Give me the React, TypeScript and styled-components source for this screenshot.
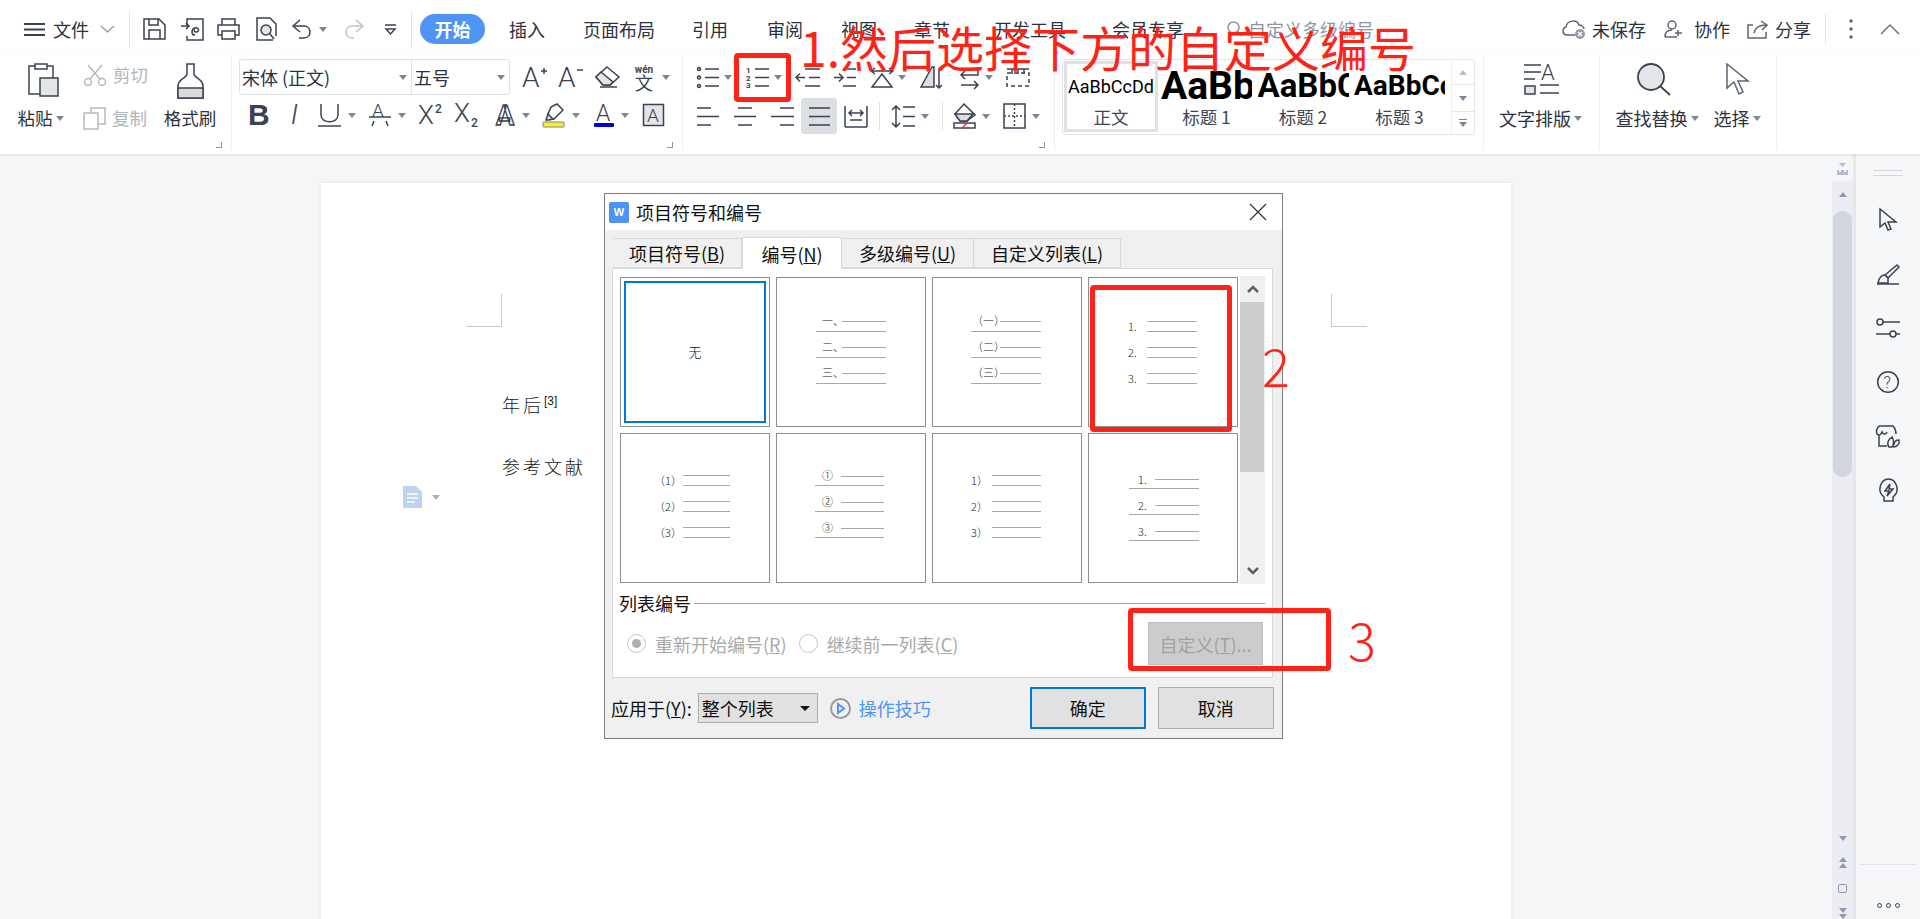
import React from 'react'
import styled, { createGlobalStyle } from 'styled-components'

const INK = '#3a4252'
const MUTED = '#b7babf'
const RED = '#ff2216'
const CJK = '"Noto Sans CJK SC", "Noto Sans", sans-serif'

const GlobalStyle = createGlobalStyle`
  html, body { margin: 0; padding: 0; overflow: hidden; }
  body { font-family: ${CJK}; color: #2c3340; }
  * { box-sizing: border-box; }
  svg { display: block; flex: none; overflow: visible; }
  svg text { font-family: Roboto, sans-serif; stroke: none; }
`

const Shell = styled.div`
  position: relative;
  width: 1920px;
  height: 919px;
  overflow: hidden;
  display: flex;
  flex-direction: column;
  background: #f5f6f8;
`

/* title bar */
const TopBar = styled.header`
  height: 52px;
  flex: none;
  background: #fff;
  display: flex;
  align-items: center;
  padding: 6px 0 0 24px;
  font-size: 18px;
  line-height: 24px;
  & > * { flex: none; }
`
const Gap = styled.div<{ $l: number }>`
  margin-left: ${(p) => p.$l}px;
  display: flex;
  align-items: center;
`
const VRule = styled.div<{ $l?: number; $h?: number }>`
  width: 1px;
  height: ${(p) => p.$h ?? 36}px;
  margin-left: ${(p) => p.$l ?? 0}px;
  background: #e3e4e7;
`
const MenuLabel = styled.span<{ $l?: number; $c?: string }>`
  margin-left: ${(p) => p.$l ?? 0}px;
  color: ${(p) => p.$c ?? '#2c3340'};
  white-space: nowrap;
`
const StartPill = styled.div`
  margin-left: 8px;
  width: 65px;
  height: 30px;
  border-radius: 15px;
  background: #4e94f5;
  color: #fff;
  font-weight: 700;
  display: flex;
  align-items: center;
  justify-content: center;
`
const Caret = styled.i<{ $l?: number; $c?: string }>`
  flex: none;
  display: block;
  margin-left: ${(p) => p.$l ?? 0}px;
  width: 0;
  height: 0;
  border-left: 4px solid transparent;
  border-right: 4px solid transparent;
  border-top: 5px solid ${(p) => p.$c ?? '#7d8598'};
`

/* ribbon */
const Ribbon = styled.div`
  height: 102px;
  flex: none;
  background: #fff;
  display: flex;
  padding-top: 4px;
  box-shadow: 0 1px 3px rgba(60, 70, 90, 0.14);
  position: relative;
  z-index: 1;
`
const Section = styled.section<{ $w: number; $pl?: number; $pt?: number }>`
  position: relative;
  flex: none;
  width: ${(p) => p.$w}px;
  height: 94px;
  padding-left: ${(p) => p.$pl ?? 0}px;
  padding-top: ${(p) => p.$pt ?? 0}px;
  border-right: 1px solid #eeeff1;
`
const Corner = styled.i<{ $x: number }>`
  position: absolute;
  left: ${(p) => p.$x}px;
  top: 86px;
  width: 6px;
  height: 6px;
  border-right: 1px solid #8d93a0;
  border-bottom: 1px solid #8d93a0;
`
const ClipRow = styled.div`
  display: flex;
  align-items: flex-start;
`
const BigTool = styled.div<{ $w: number; $ml?: number }>`
  width: ${(p) => p.$w}px;
  margin-left: ${(p) => p.$ml ?? 0}px;
  height: 67px;
  display: flex;
  flex-direction: column;
  align-items: center;
  justify-content: space-between;
  font-size: 17.5px;
  line-height: 24px;
  white-space: nowrap;
`
const ToolLabel = styled.div`
  display: flex;
  align-items: center;
  gap: 3px;
`
const SmallTools = styled.div`
  margin-left: 21px;
  width: 66px;
  height: 67px;
  display: flex;
  flex-direction: column;
  justify-content: space-between;
`
const SmallTool = styled.div`
  display: flex;
  align-items: center;
  gap: 6px;
  font-size: 17.5px;
  line-height: 24px;
  color: #b2b5ba;
  white-space: nowrap;
`
const ToolRow = styled.div<{ $h: number; $mt?: number }>`
  display: flex;
  align-items: center;
  height: ${(p) => p.$h}px;
  margin-top: ${(p) => p.$mt ?? 0}px;
`
const FontBox = styled.div`
  width: 271px;
  height: 36px;
  display: flex;
  border: 1px solid #e1e2e5;
  border-radius: 3px;
  font-size: 18px;
  line-height: 34px;
`
const FontField = styled.div<{ $w: number; $border?: boolean }>`
  width: ${(p) => p.$w}px;
  display: flex;
  align-items: center;
  justify-content: space-between;
  padding: 0 4px 0 2px;
  border-right: ${(p) => (p.$border ? '1px solid #e1e2e5' : 'none')};
`
const WenStack = styled.div`
  margin-left: 12px;
  width: 24px;
  display: flex;
  flex-direction: column;
  align-items: center;
  color: ${INK};
  font-size: 18px;
  line-height: 16px;
`
const WenTop = styled.span`
  font-size: 10px;
  font-weight: 700;
  line-height: 9px;
  font-family: Roboto, sans-serif;
`
const BoldGlyph = styled.span<{ $l: number }>`
  margin-left: ${(p) => p.$l}px;
  font: 700 30px/28px 'Liberation Sans', sans-serif;
  color: ${INK};
`
const ItalicGlyph = styled.span<{ $l: number }>`
  margin-left: ${(p) => p.$l}px;
  font: italic 300 28px/28px Roboto, sans-serif;
  color: ${INK};
`
const OutlineGlyph = styled.text`
  fill: #fff;
  stroke: ${INK};
  stroke-width: 1.3px;
  font-size: 27px;
  font-weight: 700;
`
const HiliteCell = styled.div`
  margin-left: 7px;
  width: 36px;
  height: 36px;
  border-radius: 3px;
  background: #dcdfe3;
  display: flex;
  align-items: center;
  justify-content: center;
`

/* style gallery */
const Gallery = styled.div`
  width: 413px;
  height: 76px;
  display: flex;
  border: 1px solid #e3e5e8;
  border-radius: 3px;
`
const StyleCard = styled.div<{ $w: number; $active?: boolean }>`
  flex: none;
  width: ${(p) => p.$w}px;
  height: ${(p) => (p.$active ? '71px' : '74px')};
  margin-top: ${(p) => (p.$active ? '1px' : '0')};
  margin-left: ${(p) => (p.$active ? '1px' : '0')};
  border: ${(p) => (p.$active ? '3px solid #dfe1e4' : '0')};
  padding-top: ${(p) => (p.$active ? '3px' : '6px')};
  display: flex;
  flex-direction: column;
  align-items: center;
  font-size: 17.5px;
  line-height: 24px;
  white-space: nowrap;
`
const Sample = styled.div<{ $size: number; $bold?: boolean; $w: number }>`
  width: ${(p) => p.$w}px;
  height: 40px;
  overflow: hidden;
  color: #000;
  font-family: Roboto, sans-serif;
  font-size: ${(p) => p.$size}px;
  font-weight: ${(p) => (p.$bold ? 700 : 400)};
  line-height: 40px;
`
const StyleName = styled.div<{ $mt?: number }>`
  margin-top: ${(p) => p.$mt ?? 0}px;
  color: #3f4654;
`
const GalleryScroll = styled.div`
  margin-left: auto;
  width: 23px;
  display: flex;
  flex-direction: column;
  border-left: 1px solid #eeeff1;
`
const GalleryBtn = styled.div<{ $h: number; $top?: boolean }>`
  height: ${(p) => p.$h}px;
  display: flex;
  flex-direction: column;
  gap: 2px;
  align-items: center;
  justify-content: center;
  border-top: ${(p) => (p.$top ? '1px solid #e6e7ea' : 'none')};
`
const TinyBar = styled.i`
  display: block;
  width: 8px;
  height: 1px;
  background: #7d8598;
`
const UpCaret = styled.i<{ $c?: string; $w?: number }>`
  display: block;
  width: 0;
  height: 0;
  border-left: ${(p) => p.$w ?? 4}px solid transparent;
  border-right: ${(p) => p.$w ?? 4}px solid transparent;
  border-bottom: 5px solid ${(p) => p.$c ?? '#b9bdc6'};
`
const BigColumn = styled.div<{ $w: number; $ml: number }>`
  width: ${(p) => p.$w}px;
  margin-left: ${(p) => p.$ml}px;
  height: 67px;
  display: flex;
  flex-direction: column;
  align-items: center;
  justify-content: space-between;
  font-size: 18px;
  line-height: 24px;
  white-space: nowrap;
`

/* document area */
const Workspace = styled.main`
  flex: 1;
  min-height: 0;
  display: flex;
`
const Canvas = styled.div`
  flex: 1;
  padding: 29px 0 0 321px;
  overflow: hidden;
`
const Page = styled.article`
  position: relative;
  width: 1190px;
  height: 800px;
  background: #fff;
  box-shadow: 0 0 4px rgba(60, 70, 90, 0.14);
  padding: 111px 144px 0 145px;
`
const MarkRow = styled.div`
  display: flex;
  justify-content: space-between;
`
const CropMark = styled.div<{ $side: 'left' | 'right' }>`
  width: 36px;
  height: 33px;
  border-bottom: 1px solid #c9c9c9;
  border-${(p) => p.$side}: 1px solid #c9c9c9;
`
const DocLine = styled.p<{ $mt: number }>`
  margin: ${(p) => p.$mt}px 0 0 36px;
  font-size: 18px;
  line-height: 30px;
  letter-spacing: 3px;
  color: #1c1c1c;
  font-weight: 300;
`
const Cite = styled.sup`
  font: 12px/12px 'Liberation Sans', sans-serif;
  letter-spacing: 0;
  vertical-align: 7px;
`
const ParaMark = styled.div`
  position: absolute;
  left: 82px;
  top: 303px;
  display: flex;
  align-items: center;
  gap: 10px;
`
const ScrollColumn = styled.aside`
  flex: none;
  width: 24px;
  display: flex;
  flex-direction: column;
  border-right: 3px solid #e7e8ec;
`
const RulerBtn = styled.div`
  height: 27px;
  padding: 9px 0 0 5px;
`
const Track = styled.div`
  flex: 1;
  background: #ecedf2;
  display: flex;
  flex-direction: column;
  align-items: center;
  padding-top: 11px;
`
const Thumb = styled.div`
  width: 19px;
  height: 266px;
  margin-top: 14px;
  border-radius: 9px;
  background: #d3d6de;
`
const TrackFoot = styled.div`
  margin-top: auto;
  display: flex;
  flex-direction: column;
  align-items: center;
`
const Stack = styled.div<{ $mt: number }>`
  margin-top: ${(p) => p.$mt}px;
  display: flex;
  flex-direction: column;
  gap: 1px;
`
const DownCaret = styled.i`
  display: block;
  width: 0;
  height: 0;
  border-left: 4.5px solid transparent;
  border-right: 4.5px solid transparent;
  border-top: 5px solid #8f98b0;
`
const SquareBtn = styled.i`
  display: block;
  margin-top: 16px;
  width: 9px;
  height: 9px;
  border: 1.5px solid #8f98b0;
  border-radius: 2px;
`
const Rail = styled.aside`
  flex: none;
  width: 64px;
  display: flex;
  flex-direction: column;
  align-items: center;
  background: #f6f7f9;
  padding-top: 16px;
`
const Grip = styled.div`
  width: 30px;
  height: 6px;
  border-top: 1px solid #d5d6d9;
  border-bottom: 1px solid #d5d6d9;
`
const RailIcons = styled.div`
  margin-top: 32px;
  display: flex;
  flex-direction: column;
  gap: 30px;
`
const RailSlot = styled.div`
  width: 24px;
  height: 24px;
  display: flex;
  align-items: center;
  justify-content: center;
`
const RailFoot = styled.div`
  margin-top: auto;
  width: 58px;
  height: 55px;
  border-top: 1px solid #e3e4e9;
  padding-top: 38px;
  display: flex;
  justify-content: center;
  gap: 4px;
`
const Ring = styled.i`
  display: block;
  width: 5px;
  height: 5px;
  border: 1.5px solid ${INK};
  border-radius: 50%;
`

/* dialog */
const Dialog = styled.div`
  position: absolute;
  left: 604px;
  top: 193px;
  width: 679px;
  height: 546px;
  background: #f0f0f0;
  border: 1px solid #7f7f7f;
  color: #111;
  font-size: 18px;
  line-height: 24px;
  z-index: 2;
`
const DialogTitle = styled.div`
  height: 36px;
  background: #fff;
  display: flex;
  align-items: center;
  padding: 0 16px 0 4px;
  justify-content: space-between;
`
const TitleLeft = styled.div`
  display: flex;
  align-items: center;
  gap: 7px;
`
const AppBadge = styled.div`
  width: 20px;
  height: 21px;
  border-radius: 2px;
  background: #4d94f5;
  display: flex;
  align-items: center;
  justify-content: center;
  color: #fff;
  font: 700 11px/1 'Liberation Sans', sans-serif;
`
const DialogTabs = styled.div`
  display: flex;
  margin: 7px 0 0 8px;
  height: 31px;
  align-items: flex-end;
`
const DialogTab = styled.div<{ $w: number; $active?: boolean }>`
  width: ${(p) => p.$w}px;
  height: ${(p) => (p.$active ? 32 : 30)}px;
  background: ${(p) => (p.$active ? '#fff' : '#f0f0f0')};
  border: 1px solid #d9d9d9;
  border-bottom: ${(p) => (p.$active ? '0' : '1px solid #d9d9d9')};
  border-left-width: ${(p) => (p.$active ? 1 : 0)}px;
  display: flex;
  align-items: center;
  justify-content: center;
  position: relative;
  z-index: ${(p) => (p.$active ? 1 : 0)};
  margin-bottom: ${(p) => (p.$active ? -1 : 0)}px;
  white-space: nowrap;
`
const Panel = styled.div`
  margin: 0 9px 0 7px;
  height: 410px;
  background: #fff;
  border: 1px solid #d9d9d9;
  padding: 8px 0 0 7px;
  display: flex;
  flex-direction: column;
`
const ChoiceArea = styled.div`
  display: flex;
  align-items: flex-start;
`
const CardGrid = styled.div`
  display: grid;
  grid-template-columns: repeat(4, 150px);
  grid-auto-rows: 150px;
  gap: 6px;
`
const Card = styled.div<{ $left?: number; $top?: number }>`
  border: 1px solid #8e8e8e;
  padding-top: ${(p) => p.$top ?? 0}px;
  padding-left: ${(p) => p.$left ?? 0}px;
  display: flex;
  flex-direction: column;
`
const NoneCard = styled.div`
  border: 1px solid #8e8e8e;
  padding: 3px;
`
const NoneInner = styled.div`
  height: 100%;
  border: 2px solid #0078d7;
  display: flex;
  align-items: center;
  justify-content: center;
  font-size: 13px;
  font-weight: 300;
`
const PreviewRow = styled.div<{ $w: number; $under?: boolean; $pad: number }>`
  flex: none;
  width: ${(p) => p.$w}px;
  height: 26px;
  padding-left: ${(p) => p.$pad}px;
  display: flex;
  align-items: flex-end;
  border-bottom: ${(p) => (p.$under ? '1px solid #a8a8a8' : '0')};
`
const PreviewLabel = styled.span<{ $w: number; $pb: number }>`
  flex: none;
  width: ${(p) => p.$w}px;
  padding-bottom: ${(p) => p.$pb}px;
  font-size: 11px;
  font-weight: 300;
  line-height: 12px;
  color: #222;
  white-space: nowrap;
`
/* a row either has one rule above its own underline, or a pair of rules after the label */
const PreviewRule = styled.div<{ $pair?: boolean; $gap: number }>`
  flex: 1;
  height: ${(p) => (p.$pair ? p.$gap + 2 : 1)}px;
  margin-bottom: ${(p) => (p.$pair ? 0 : p.$gap)}px;
  border-top: 1px solid #a8a8a8;
  border-bottom: ${(p) => (p.$pair ? '1px solid #a8a8a8' : '0')};
`
const VScroll = styled.div`
  margin: -1px 0 0 2px;
  width: 25px;
  height: 308px;
  background: #f0f0f0;
  display: flex;
  flex-direction: column;
  align-items: center;
`
const ScrollArrow = styled.div<{ $end?: boolean }>`
  height: 26px;
  margin-top: ${(p) => (p.$end ? 'auto' : '0')};
  display: flex;
  align-items: center;
  justify-content: center;
`
const VThumb = styled.div`
  width: 24px;
  margin-right: 1px;
  height: 170px;
  background: #cdcdcd;
`
const GroupHead = styled.div`
  margin: 10px 0 0 -1px;
  height: 18px;
  display: flex;
  align-items: center;
  gap: 3px;
  padding-right: 7px;
`
const GroupLine = styled.div`
  flex: 1;
  height: 1px;
  background: #a0a0a0;
`
const OptionRow = styled.div`
  margin-top: 10px;
  height: 43px;
  display: flex;
  align-items: center;
  padding-left: 7px;
  padding-right: 9px;
  color: #a9a9a9;
`
const Radio = styled.i<{ $on?: boolean; $l?: number }>`
  flex: none;
  position: relative;
  display: block;
  width: 19px;
  height: 19px;
  margin-left: ${(p) => p.$l ?? 0}px;
  margin-right: 9px;
  border: 1px solid #c8c8c8;
  border-radius: 50%;
  &::after {
    content: '';
    display: ${(p) => (p.$on ? 'block' : 'none')};
    position: absolute;
    inset: 4px;
    border-radius: 50%;
    background: #b0b0b0;
  }
`
const DisabledBtn = styled.div`
  margin-left: auto;
  width: 115px;
  height: 43px;
  background: #cccccc;
  border: 1px solid #bfbfbf;
  display: flex;
  align-items: center;
  justify-content: center;
  color: #a2a2a2;
`
const DialogFoot = styled.div`
  margin-top: 9px;
  padding: 0 8px 0 6px;
  display: flex;
  align-items: center;
  height: 42px;
`
const SelectBox = styled.div`
  margin-left: 6px;
  width: 120px;
  height: 30px;
  background: #e1e1e1;
  border: 1px solid #adadad;
  display: flex;
  align-items: center;
  justify-content: space-between;
  padding: 0 7px 0 3px;
`
const BlackCaret = styled.i`
  display: block;
  width: 0;
  height: 0;
  border-left: 5px solid transparent;
  border-right: 5px solid transparent;
  border-top: 5px solid #111;
`
const LinkText = styled.span`
  color: #4d94f5;
  margin-left: 8px;
`
const FootButton = styled.div<{ $primary?: boolean; $l: number }>`
  width: 116px;
  height: 42px;
  margin-left: ${(p) => p.$l}px;
  background: #e1e1e1;
  border: ${(p) => (p.$primary ? '2px solid #0078d7' : '1px solid #adadad')};
  display: flex;
  align-items: center;
  justify-content: center;
`

/* red annotations drawn over the screenshot */
const RedBox = styled.div<{ $x: number; $y: number; $w: number; $h: number }>`
  position: absolute;
  left: ${(p) => p.$x}px;
  top: ${(p) => p.$y}px;
  width: ${(p) => p.$w}px;
  height: ${(p) => p.$h}px;
  border: 5px solid ${RED};
  border-radius: 4px;
  z-index: 3;
`
const RedText = styled.div<{ $x: number; $y: number; $size: number }>`
  position: absolute;
  left: ${(p) => p.$x}px;
  top: ${(p) => p.$y}px;
  color: ${RED};
  font-size: ${(p) => p.$size}px;
  line-height: 1;
  font-weight: 400;
  white-space: nowrap;
  z-index: 3;
`
const RedDigit = styled(RedText)`
  font-weight: 300;
`

type IconProps = { w: number; h: number; c?: string; sw?: number; children: React.ReactNode }
const Ic = ({ w, h, c = INK, sw = 1.5, children }: IconProps) => (
  <svg width={w} height={h} viewBox={`0 0 ${w} ${h}`} fill="none" stroke={c} strokeWidth={sw}>
    {children}
  </svg>
)

const Lines = ({ w, rows }: { w: number; rows: [number, number][] }) => (
  <Ic w={w} h={21}>
    <path d={rows.map(([a, b], i) => `M${a} ${2 + i * 8.5}H${b}`).join('')} />
  </Ic>
)

type PreviewDef = {
  labels: string[]
  left: number
  top: number
  width: number
  pad: number
  labelW: number
  full?: boolean
  gap: number
  pb: number
}

const previews: PreviewDef[] = [
  { labels: ['一、', '二、', '三、'], left: 39, top: 28, width: 70, pad: 6, labelW: 20, full: true, gap: 9, pb: 5 },
  { labels: ['（一）', '（二）', '（三）'], left: 38, top: 28, width: 70, pad: 1, labelW: 28, full: true, gap: 9, pb: 5 },
  { labels: ['1.', '2.', '3.'], left: 39, top: 28, width: 69, pad: 0, labelW: 19, gap: 9, pb: 0 },
  { labels: ['（1）', '（2）', '（3）'], left: 33, top: 26, width: 76, pad: 0, labelW: 29, gap: 9, pb: 0 },
  { labels: ['①', '②', '③'], left: 38, top: 26, width: 69, pad: 7, labelW: 19, full: true, gap: 8, pb: 4 },
  { labels: ['1）', '2）', '3）'], left: 38, top: 26, width: 70, pad: 0, labelW: 21, gap: 9, pb: 0 },
  { labels: ['1.', '2.', '3.'], left: 40, top: 29, width: 70, pad: 9, labelW: 17, full: true, gap: 8, pb: 3 },
]

const Preview = ({ def }: { def: PreviewDef }) => (
  <Card $left={def.left} $top={def.top}>
    {def.labels.map((l) => (
      <PreviewRow key={l} $w={def.width} $pad={def.pad} $under={def.full}>
        <PreviewLabel $w={def.labelW} $pb={def.pb}>{l}</PreviewLabel>
        <PreviewRule $gap={def.gap} $pair={!def.full} />
      </PreviewRow>
    ))}
  </Card>
)

const App = () => (
  <Shell>
    <GlobalStyle />
    <TopBar>
      <Ic w={21} h={13} sw={2}><path d="M0 1H21M0 6.500H21M0 12H21" /></Ic>
      <MenuLabel $l={8}>文件</MenuLabel>
      <Gap $l={11}>
        <Ic w={15} h={8} c="#9aa0ab"><path d="M1 1L7.500 7L14 1" /></Ic>
      </Gap>
      <VRule $l={14} />
      <Gap $l={13}>
        <Ic w={23} h={22}>
          <path d="M1 1H16L22 7V21H1Z" />
          <path d="M6 1V7H15V1M6 21V12H17V21" />
        </Ic>
      </Gap>
      <Gap $l={15}>
        <Ic w={23} h={23}>
          <path d="M6 7V1H22V22H6V18" />
          <path d="M0 8H8M5 5L8 8L5 11" />
          <path d="M14 17C10 17 10 11 14 10C18 9 19 14 15 14C13 14 13 12 14 12" />
        </Ic>
      </Gap>
      <Gap $l={13}>
        <Ic w={23} h={22}>
          <path d="M5 7V1H18V7M5 17H1V7H22V17H18" />
          <path d="M5 13H18V21H5Z" />
        </Ic>
      </Gap>
      <Gap $l={16}>
        <Ic w={21} h={24}>
          <path d="M17 23H1V1H14L20 7V19" />
          <circle cx="10" cy="13" r="5" fill="#e3e5e8" />
          <path d="M14 17L18 22" />
        </Ic>
      </Gap>
      <Gap $l={15}>
        <Ic w={20} h={20}>
          <path d="M8 1L1 7L8 13" />
          <path d="M1 7H12C20 7 20 19 12 19H7" />
        </Ic>
      </Gap>
      <Caret $l={7} />
      <Gap $l={17}>
        <Ic w={20} h={20} c="#bfc2c7">
          <path d="M12 1L19 7L12 13" />
          <path d="M19 7H8C0 7 0 19 8 19H10" />
        </Ic>
      </Gap>
      <Gap $l={21}>
        <Ic w={11} h={11}><path d="M0 1H11M1 5L5.500 10L10 5Z" /></Ic>
      </Gap>
      <VRule $l={15} />
      <StartPill>开始</StartPill>
      <MenuLabel $l={24}>插入</MenuLabel>
      <MenuLabel $l={38}>页面布局</MenuLabel>
      <MenuLabel $l={37}>引用</MenuLabel>
      <MenuLabel $l={39}>审阅</MenuLabel>
      <MenuLabel $l={38}>视图</MenuLabel>
      <MenuLabel $l={37}>章节</MenuLabel>
      <MenuLabel $l={44}>开发工具</MenuLabel>
      <MenuLabel $l={46}>会员专享</MenuLabel>
      <Gap $l={43}>
        <Ic w={15} h={16} c="#8e95a3"><circle cx="6.500" cy="6.500" r="5.500" /><path d="M10.500 10.500L15 15" /></Ic>
      </Gap>
      <MenuLabel $l={6} $c="#8e95a3">自定义多级编号</MenuLabel>
      <Gap $l={188}>
        <Ic w={23} h={20} c="#5c6475">
          <path d="M13 16H5C0 16 0 9 4 8C5 1 15 0 17 6C19 6 22 8 22 10" />
          <circle cx="18" cy="15" r="5" fill="#959cae" stroke="none" />
          <path d="M16 13L20 17M20 13L16 17" stroke="#fff" />
        </Ic>
      </Gap>
      <MenuLabel $l={7}>未保存</MenuLabel>
      <Gap $l={18}>
        <Ic w={20} h={18} c="#5c6475">
          <circle cx="8" cy="5" r="4" />
          <path d="M1 17C1 12 4 10 8 10M1 17H13M14 10V16M11 13H18" />
        </Ic>
      </Gap>
      <MenuLabel $l={10}>协作</MenuLabel>
      <Gap $l={17}>
        <Ic w={21} h={19} c="#5c6475">
          <path d="M6 5H1V18H19V12" />
          <path d="M7 13C8 8 11 5 19 5M14 1L20 5L15 10" />
        </Ic>
      </Gap>
      <MenuLabel $l={7}>分享</MenuLabel>
      <VRule $l={14} $h={30} />
      <Gap $l={23}>
        <Ic w={4} h={20} c="none">
          <circle cx="2" cy="2" r="1.700" fill="#5c6475" />
          <circle cx="2" cy="10" r="1.700" fill="#5c6475" />
          <circle cx="2" cy="18" r="1.700" fill="#5c6475" />
        </Ic>
      </Gap>
      <Gap $l={27}>
        <Ic w={20} h={11} c="#6d7484"><path d="M1 10L10 1L19 10" /></Ic>
      </Gap>
    </TopBar>

    <Ribbon>
      <Section $w={232} $pl={19} $pt={7}>
        <ClipRow>
          <BigTool $w={43}>
            <Gap $l={6}>
              <Ic w={31} h={34}>
                <rect x="1" y="3" width="24" height="28" />
                <rect x="7" y="1" width="12" height="5" fill="#fff" />
                <rect x="12" y="15" width="18" height="18" fill="#e3e5e8" />
              </Ic>
            </Gap>
            <ToolLabel>粘贴<Caret /></ToolLabel>
          </BigTool>
          <SmallTools>
            <SmallTool>
              <Ic w={24} h={22} c={MUTED}>
                <circle cx="5" cy="18" r="3.500" />
                <circle cx="19" cy="18" r="3.500" />
                <path d="M7 15L19 1M17 15L5 1" />
              </Ic>
              剪切
            </SmallTool>
            <SmallTool>
              <Ic w={23} h={23} c={MUTED}>
                <rect x="8" y="1" width="14" height="16" />
                <rect x="1" y="6" width="14" height="16" fill="#fff" />
              </Ic>
              复制
            </SmallTool>
          </SmallTools>
          <BigTool $w={54} $ml={14}>
            <Ic w={27} h={36}>
              <path d="M10 1H17V11C17 15 26 16 26 23V35H1V23C1 16 10 15 10 11Z" />
              <path d="M1 25H26V35H1Z" fill="#d8dade" />
            </Ic>
            格式刷
          </BigTool>
        </ClipRow>
        <Corner $x={216} />
      </Section>

      <Section $w={451} $pl={7} $pt={3}>
        <ToolRow $h={36}>
          <FontBox>
            <FontField $w={172} $border>宋体 (正文)<Caret /></FontField>
            <FontField $w={97}>五号<Caret /></FontField>
          </FontBox>
          <Gap $l={12}>
            <Ic w={25} h={22}>
              <text x="0" y="21" fontSize="28" fontWeight="300" fill={INK}>A</text>
              <path d="M19 5H25M22 2V8" />
            </Ic>
          </Gap>
          <Gap $l={11}>
            <Ic w={25} h={22}>
              <text x="0" y="21" fontSize="28" fontWeight="300" fill={INK}>A</text>
              <path d="M19 4H25" />
            </Ic>
          </Gap>
          <Gap $l={12}>
            <Ic w={25} h={22}>
              <path d="M12 1L24 11L15 19H8L1 11Z" />
              <path d="M6 6L18 16L15 19H8L1 11Z" fill="#e3e5e8" />
              <path d="M5 21H22" />
            </Ic>
          </Gap>
          <WenStack><WenTop>wén</WenTop>文</WenStack>
          <Caret $l={6} />
        </ToolRow>
        <ToolRow $h={28} $mt={6}>
          <BoldGlyph $l={9}>B</BoldGlyph>
          <ItalicGlyph $l={21}>I</ItalicGlyph>
          <Gap $l={20}>
            <Ic w={23} h={24}><path d="M3 1V12C3 21 20 21 20 12V1M0 23H23" /></Ic>
          </Gap>
          <Caret $l={7} />
          <Gap $l={13}>
            <Ic w={22} h={24}>
              <text x="3" y="14" fontSize="19" fontWeight="300" fill={INK}>A</text>
              <path d="M0 14H22M5 18L3 23M17 18L19 23" />
            </Ic>
          </Gap>
          <Caret $l={7} />
          <Gap $l={12}>
            <Ic w={25} h={24}>
              <text x="0" y="21" fontSize="26" fontWeight="300" fill={INK}>X</text>
              <text x="17" y="10" fontSize="12" fontWeight="500" fill={INK}>2</text>
            </Ic>
          </Gap>
          <Gap $l={11}>
            <Ic w={26} h={24}>
              <text x="0" y="19" fontSize="26" fontWeight="300" fill={INK}>X</text>
              <text x="17" y="24" fontSize="12" fontWeight="500" fill={INK}>2</text>
            </Ic>
          </Gap>
          <Gap $l={14}>
            <Ic w={22} h={22}>
              <OutlineGlyph x="2" y="21">A</OutlineGlyph>
            </Ic>
          </Gap>
          <Caret $l={6} />
          <Gap $l={12}>
            <Ic w={23} h={24}>
              <path d="M9 4L15 1L21 7L12 16L6 16V11Z" />
              <path d="M6 11L11 16L7 17H4Z" fill="#dcdee2" />
              <rect x="1" y="19" width="21" height="5" rx="1" fill="#fff200" stroke="#a9a9a0" />
            </Ic>
          </Gap>
          <Caret $l={7} />
          <Gap $l={14}>
            <Ic w={20} h={24}>
              <text x="2" y="18" fontSize="23" fontWeight="300" fill={INK}>A</text>
              <rect x="0" y="20" width="20" height="4" rx="1" fill="#0000e0" stroke="none" />
            </Ic>
          </Gap>
          <Caret $l={7} />
          <Gap $l={14}>
            <Ic w={21} h={22}>
              <rect x="0.500" y="0.500" width="20" height="21" fill="#e3e5e8" />
              <text x="4" y="18" fontSize="19" fontWeight="300" fill={INK}>A</text>
            </Ic>
          </Gap>
        </ToolRow>
        <Corner $x={435} />
      </Section>

      <Section $w={372} $pl={14} $pt={11}>
        <ToolRow $h={21}>
          <Ic w={22} h={21}>
            <circle cx="2" cy="2" r="1.500" /><circle cx="2" cy="10.500" r="1.500" /><circle cx="2" cy="19" r="1.500" />
            <path d="M8 2H22M8 10.500H22M8 19H22" />
          </Ic>
          <Caret $l={5} />
          <Gap $l={14}>
            <Ic w={23} h={21}>
              <text x="0" y="6" fontSize="8" fontWeight="700" fill={INK}>1</text>
              <text x="0" y="14" fontSize="8" fontWeight="700" fill={INK}>2</text>
              <text x="0" y="21" fontSize="8" fontWeight="700" fill={INK}>3</text>
              <path d="M9 2H23M9 10.500H23M9 19H23" />
            </Ic>
          </Gap>
          <Caret $l={5} />
          <Gap $l={13}>
            <Ic w={25} h={21}><path d="M10 2H25M14 10.500H25M10 19H25M10 10.500H1M5 6.500L1 10.500L5 14.500" /></Ic>
          </Gap>
          <Gap $l={13}>
            <Ic w={23} h={21}><path d="M10 2H23M14 10.500H23M10 19H23M1 10.500H10M6 6.500L10 10.500L6 14.500" /></Ic>
          </Gap>
          <Gap $l={14}>
            <Ic w={24} h={21}>
              <path d="M1 4H23M5 1L1 4L5 7M19 1L23 4L19 7M12 7L2 20H22Z" />
            </Ic>
          </Gap>
          <Caret $l={4} />
          <Gap $l={14}>
            <Ic w={23} h={23}>
              <path d="M12 1L1 21H14V1Z" fill="#dcdee2" />
              <path d="M19 3V22M16 19L19 22L22 19" />
            </Ic>
          </Gap>
          <Gap $l={15}>
            <Ic w={21} h={23}>
              <path d="M20 1V9H3M7 5L3 9L7 13M3 19H20M16 15L20 19L16 23" />
            </Ic>
          </Gap>
          <Caret $l={6} />
          <Gap $l={13}>
            <Ic w={24} h={19}>
              <path d="M1 5H23V18H1Z" strokeDasharray="4 3" />
              <path d="M1 1H23M6 1V6M12 1V6M18 1V6" />
            </Ic>
          </Gap>
        </ToolRow>
        <ToolRow $h={36} $mt={10}>
          <Lines w={22} rows={[[0, 14], [0, 22], [0, 14]]} />
          <Gap $l={15}><Lines w={22} rows={[[4, 18], [0, 22], [4, 18]]} /></Gap>
          <Gap $l={15}><Lines w={23} rows={[[9, 23], [0, 23], [9, 23]]} /></Gap>
          <HiliteCell><Lines w={21} rows={[[0, 21], [0, 21], [0, 21]]} /></HiliteCell>
          <Gap $l={7}>
            <Ic w={24} h={23}>
              <path d="M1 1V22M23 1V22M1 22H23M6 15H18M6 8H18M8 5L5 8L8 11M16 5L19 8L16 11" />
            </Ic>
          </Gap>
          <VRule $l={11} $h={28} />
          <Gap $l={11}>
            <Ic w={24} h={25}>
              <path d="M5 2V23M1 6L5 2L9 6M1 19L5 23L9 19M12 3H24M12 12.500H24M12 22H24" />
            </Ic>
          </Gap>
          <Caret $l={6} />
          <VRule $l={13} $h={28} />
          <Gap $l={10}>
            <Ic w={23} h={26}>
              <path d="M11 1L22 12L14 18H7L2 11Z" />
              <path d="M2 11H20L14 18H7Z" fill="#dcdee2" />
              <rect x="1" y="20" width="21" height="5" />
              <path d="M9 25L14 20" stroke="#e33" />
            </Ic>
          </Gap>
          <Caret $l={6} />
          <Gap $l={13}>
            <Ic w={23} h={26}>
              <rect x="1" y="1" width="21" height="24" />
              <path d="M11.500 1V25M1 13H22" strokeDasharray="2 2" />
            </Ic>
          </Gap>
          <Caret $l={6} />
        </ToolRow>
        <Corner $x={356} />
      </Section>

      <Section $w={429} $pl={7} $pt={3}>
        <Gallery>
          <StyleCard $w={94} $active>
            <Sample $size={18} $w={86}>AaBbCcDd</Sample>
            <StyleName $mt={-2}>正文</StyleName>
          </StyleCard>
          <StyleCard $w={97}>
            <Sample $size={39} $bold $w={91}>AaBbCc</Sample>
            <StyleName $mt={-1}>标题 1</StyleName>
          </StyleCard>
          <StyleCard $w={96}>
            <Sample $size={33} $bold $w={91}>AaBbCc</Sample>
            <StyleName $mt={-1}>标题 2</StyleName>
          </StyleCard>
          <StyleCard $w={97}>
            <Sample $size={28} $bold $w={91}>AaBbCc</Sample>
            <StyleName $mt={-1}>标题 3</StyleName>
          </StyleCard>
          <GalleryScroll>
            <GalleryBtn $h={24}><UpCaret /></GalleryBtn>
            <GalleryBtn $h={27} $top><Caret /></GalleryBtn>
            <GalleryBtn $h={23} $top><TinyBar /><Caret /></GalleryBtn>
          </GalleryScroll>
        </Gallery>
      </Section>

      <Section $w={116} $pt={7}>
        <BigColumn $w={95} $ml={9}>
          <Gap $l={2}>
            <Ic w={35} h={31}>
              <path d="M0 2H17M0 9H17M0 16H11" />
              <text x="17" y="17" fontSize="22" fontWeight="300" fill={INK}>A</text>
              <rect x="1" y="23" width="10" height="8" fill="#e3e5e8" />
              <path d="M16 22H35M16 30H35" />
            </Ic>
          </Gap>
          <ToolLabel>文字排版<Caret /></ToolLabel>
        </BigColumn>
      </Section>

      <Section $w={177} $pt={7}>
        <ClipRow>
          <BigColumn $w={86} $ml={14}>
            <Gap $l={-6}>
              <Ic w={34} h={32} sw={1.800}>
                <circle cx="14" cy="14" r="13" fill="#e3e5e8" />
                <path d="M23 23L33 32" />
              </Ic>
            </Gap>
            <ToolLabel>查找替换<Caret /></ToolLabel>
          </BigColumn>
          <BigColumn $w={50} $ml={12}>
            <Ic w={23} h={33} c="#5c6475">
              <path d="M1 1V25L8 19L13 31L17 29L12 18H22Z" />
            </Ic>
            <ToolLabel>选择<Caret /></ToolLabel>
          </BigColumn>
        </ClipRow>
      </Section>
    </Ribbon>

    <Workspace>
      <Canvas>
        <Page>
          <MarkRow>
            <CropMark $side="right" />
            <CropMark $side="left" />
          </MarkRow>
          <DocLine $mt={62}>年后<Cite>[3]</Cite></DocLine>
          <DocLine $mt={32}>参考文献</DocLine>
          <ParaMark>
            <Ic w={19} h={22} c="none">
              <path d="M0 0H13L19 6V22H0Z" fill="#bfd3ee" />
              <path d="M4 8H15M4 12H15M4 16H12" stroke="#fff" />
            </Ic>
            <Caret $c="#b0b0b0" />
          </ParaMark>
        </Page>
      </Canvas>

      <ScrollColumn>
        <RulerBtn>
          <Ic w={11} h={12} c="none">
            <path d="M2 0H9L5.500 4Z" fill="#b4bccd" />
            <path d="M0 7V12H11V7H9V9H7V7H4V9H2V7Z" fill="#b4bccd" />
          </Ic>
        </RulerBtn>
        <Track>
          <UpCaret $c="#8f98b0" $w={4.500} />
          <Thumb />
          <TrackFoot>
            <DownCaret />
            <Stack $mt={16}>
              <UpCaret $c="#8f98b0" $w={4.500} />
              <UpCaret $c="#8f98b0" $w={4.500} />
            </Stack>
            <SquareBtn />
            <Stack $mt={15}>
              <DownCaret />
              <DownCaret />
            </Stack>
          </TrackFoot>
        </Track>
      </ScrollColumn>

      <Rail>
        <Grip />
        <RailIcons>
          <RailSlot>
            <Ic w={18} h={24}><path d="M1 1V19L6 15L9 22L12 21L9 14H17Z" /></Ic>
          </RailSlot>
          <RailSlot>
            <Ic w={22} h={21}>
              <path d="M20 1L22 3L11 14L8 11ZM0 20H22" />
              <path d="M1 19H11V14L8 11C4 11 2 14 1 19Z" />
            </Ic>
          </RailSlot>
          <RailSlot>
            <Ic w={24} h={20}>
              <circle cx="4" cy="4" r="3" /><path d="M7 4H24" />
              <circle cx="17" cy="16" r="3" /><path d="M0 16H14M20 16H24" />
            </Ic>
          </RailSlot>
          <RailSlot>
            <Ic w={22} h={22}>
              <circle cx="11" cy="11" r="10.300" />
              <text x="6.500" y="16.500" fontSize="16" fontWeight="300" fill={INK}>?</text>
            </Ic>
          </RailSlot>
          <RailSlot>
            <Ic w={24} h={23}>
              <path d="M3 10V21H11M3 1H17C19 3 20 6 20 9M3 1C1 3 0 6 1 9C3 11 5 10 6 7C7 10 10 10 11 7" />
              <path d="M13 22C10 18 13 14 16 12C18 15 18 20 16 22ZM17 22C21 22 24 19 23 15C20 15 18 17 18 20" />
            </Ic>
          </RailSlot>
          <RailSlot>
            <Ic w={21} h={24}>
              <path d="M6 19C-2 13 3 1 10.500 1C18 1 23 13 15 19V23H6Z" />
              <path d="M12 6L7 13H11L9 18L15 11H11Z" />
            </Ic>
          </RailSlot>
        </RailIcons>
        <RailFoot><Ring /><Ring /><Ring /></RailFoot>
      </Rail>
    </Workspace>

    <Dialog>
      <DialogTitle>
        <TitleLeft>
          <AppBadge>W</AppBadge>
          项目符号和编号
        </TitleLeft>
        <Ic w={16} h={16} c="#333" sw={1.200}><path d="M0 0L16 16M16 0L0 16" /></Ic>
      </DialogTitle>
      <DialogTabs>
        <DialogTab $w={129}>项目符号(<u>B</u>)</DialogTab>
        <DialogTab $w={100} $active>编号(<u>N</u>)</DialogTab>
        <DialogTab $w={132}>多级编号(<u>U</u>)</DialogTab>
        <DialogTab $w={147}>自定义列表(<u>L</u>)</DialogTab>
      </DialogTabs>
      <Panel>
        <ChoiceArea>
          <CardGrid>
            <NoneCard><NoneInner>无</NoneInner></NoneCard>
            {previews.map((def, i) => (
              <Preview key={i} def={def} />
            ))}
          </CardGrid>
          <VScroll>
            <ScrollArrow>
              <Ic w={12} h={8} c="#606060" sw={2.500}><path d="M1 7L6 2L11 7" /></Ic>
            </ScrollArrow>
            <VThumb />
            <ScrollArrow $end>
              <Ic w={12} h={8} c="#606060" sw={2.500}><path d="M1 1L6 6L11 1" /></Ic>
            </ScrollArrow>
          </VScroll>
        </ChoiceArea>
        <GroupHead>列表编号<GroupLine /></GroupHead>
        <OptionRow>
          <Radio $on />
          重新开始编号(<u>R</u>)
          <Radio $l={12} />
          继续前一列表(<u>C</u>)
          <DisabledBtn>自定义(<u>T</u>)...</DisabledBtn>
        </OptionRow>
      </Panel>
      <DialogFoot>
        应用于(<u>Y</u>):
        <SelectBox>整个列表<BlackCaret /></SelectBox>
        <Gap $l={12}>
          <Ic w={21} h={21} c="#9a9a9a" sw={2}>
            <circle cx="10.500" cy="10.500" r="9.500" />
            <path d="M8 6V15L14 10.500Z" stroke="#4d94f5" />
          </Ic>
        </Gap>
        <LinkText>操作技巧</LinkText>
        <FootButton $primary $l={99}>确定</FootButton>
        <FootButton $l={12}>取消</FootButton>
      </DialogFoot>
    </Dialog>

    <RedBox $x={734} $y={53} $w={57} $h={49} />
    <RedBox $x={1090} $y={285} $w={142} $h={147} />
    <RedBox $x={1128} $y={608} $w={203} $h={63} />
    <RedText $x={800} $y={22} $size={48}>1.然后选择下方的自定义编号</RedText>
    <RedDigit $x={1262} $y={339} $size={52}>2</RedDigit>
    <RedDigit $x={1348} $y={613} $size={52}>3</RedDigit>
  </Shell>
)

export default App
